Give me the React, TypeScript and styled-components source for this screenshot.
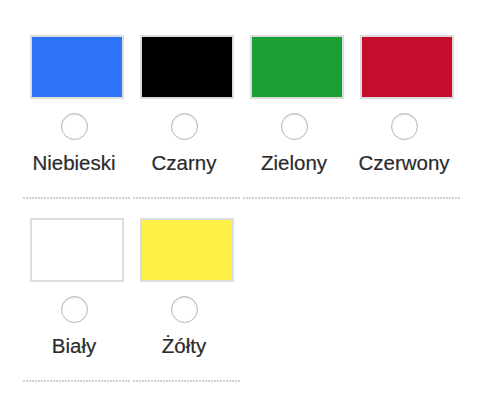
import React from "react";
import styled, { createGlobalStyle } from "styled-components";

const Global = createGlobalStyle`
  html, body { margin: 0; padding: 0; background: #fff; }
  body { font-family: "Liberation Sans", Arial, sans-serif; color: #2b2b2b; }
`;

const Page = styled.div`
  padding: 35px 0 0 23px;
  display: flex;
  flex-direction: column;
  gap: 19px;
`;

const Row = styled.div`
  display: flex;
  gap: 2px;
`;

const Item = styled.label`
  width: 108px;
  display: flex;
  flex-direction: column;
  align-items: center;
  padding-bottom: 24px;
  background-image: repeating-linear-gradient(to right, #cfcfcf 0 2px, transparent 2px 3px);
  background-size: 100% 2px;
  background-repeat: no-repeat;
  background-position: bottom left;
  cursor: pointer;
`;

const Swatch = styled.div<{ $color: string }>`
  width: 90px;
  height: 60px;
  background: ${(p) => p.$color};
  border: 2px solid #dcdcdc;
`;

const Radio = styled.input.attrs({ type: "radio" })`
  appearance: none;
  -webkit-appearance: none;
  margin: 14px 6px 0 0;
  width: 27px;
  height: 27px;
  border-radius: 50%;
  border: 1px solid #b4b4b4;
  background: radial-gradient(circle at 50% 60%, #ffffff 55%, #f0f0f0 100%);
  box-shadow: inset 0 1px 1px rgba(0, 0, 0, 0.08);
  box-sizing: border-box;
`;

const Name = styled.span`
  margin: 11px 6px 0 0;
  font-size: 20.5px;
  line-height: 24px;
  color: #2b2b2b;
  white-space: nowrap;
  -webkit-text-stroke: 0.2px #2b2b2b;
`;

const rows = [
  [
    { name: "Niebieski", color: "#2d74f8" },
    { name: "Czarny", color: "#000000" },
    { name: "Zielony", color: "#1a9f35" },
    { name: "Czerwony", color: "#c70b2c" },
  ],
  [
    { name: "Biały", color: "#ffffff" },
    { name: "Żółty", color: "#fff047" },
  ],
];

export default function App() {
  return (
    <>
      <Global />
      <Page>
        {rows.map((r, i) => (
          <Row key={i}>
            {r.map((c) => (
              <Item key={c.name}>
                <Swatch $color={c.color} />
                <Radio name="color" value={c.name} />
                <Name>{c.name}</Name>
              </Item>
            ))}
          </Row>
        ))}
      </Page>
    </>
  );
}
